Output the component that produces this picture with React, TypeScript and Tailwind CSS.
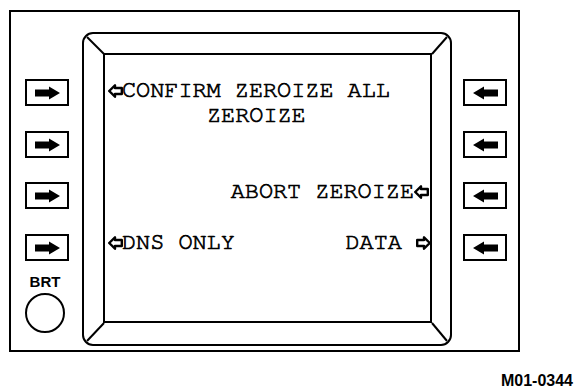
import React from "react";

const mono = {
  fontFamily: "'Nimbus Mono PS', 'Nimbus Mono L', FreeMono, Courier, 'Courier New', 'Liberation Mono', monospace",
};
const sans = { fontFamily: "'Liberation Sans', Arial, sans-serif" };

function HollowArrow({ dir }: { dir: "left" | "right" }) {
  return (
    <span className="inline-block w-[14px] align-[-1px]">
      <svg width="15" height="14" viewBox="0 0 15 14" className={dir === "right" ? "-scale-x-100" : ""}>
        <path
          d="M1.2 7 L7 1.3 L7 4 L13.8 4 L13.8 10 L7 10 L7 12.7 Z"
          fill="none"
          stroke="black"
          strokeWidth="2.4"
          strokeLinejoin="round"
        />
      </svg>
    </span>
  );
}

function KeyButton({ dir }: { dir: "left" | "right" }) {
  return (
    <div className="w-[44px] h-[27px] border-2 border-black flex items-center justify-center">
      <svg width="27" height="14" viewBox="0 0 27 14" className={dir === "left" ? "-scale-x-100" : ""}>
        <path d="M1 3.6 L15 3.6 L15 0.5 L26 7 L15 13.5 L15 10.4 L1 10.4 Z" fill="black" />
      </svg>
    </div>
  );
}

export default function App() {
  return (
    <div className="w-[584px] h-[389px] bg-white pt-[10px] pl-[9px]">
      <div className="w-[511px] h-[342px] border-2 border-black flex">
        {/* Left key column */}
        <div className="w-[71px] flex flex-col pl-[14px] pt-[67px]">
          <KeyButton dir="right" />
          <div className="h-[25px]" />
          <KeyButton dir="right" />
          <div className="h-[24px]" />
          <KeyButton dir="right" />
          <div className="h-[25px]" />
          <KeyButton dir="right" />
          <div
            className="mt-[13px] w-[40px] text-center text-[15px] font-bold leading-none"
            style={sans}
          >
            BRT
          </div>
          <div className="mt-[4px] w-[40px] h-[40px] rounded-full border-2 border-black" />
        </div>

        {/* Bezel */}
        <div className="relative mt-[20px] w-[370px] h-[314px] border-2 border-black rounded-[11px] pt-[19px] pl-[19px]">
          <svg className="absolute -left-[2px] -top-[2px]" width="370" height="314" viewBox="0 0 370 314">
            <line x1="5" y1="5" x2="22" y2="22" stroke="black" strokeWidth="2" />
            <line x1="365" y1="5" x2="350" y2="22" stroke="black" strokeWidth="2" />
            <line x1="5" y1="309" x2="22" y2="291" stroke="black" strokeWidth="2" />
            <line x1="365" y1="309" x2="350" y2="291" stroke="black" strokeWidth="2" />
          </svg>
          <div
            className="relative w-[329px] h-[270px] border-2 border-black bg-white pt-[23px] pl-[3px] pr-0 text-[23.5px] text-black leading-[25.3px] [-webkit-text-stroke:0.7px_black]"
            style={mono}
          >
            <div className="whitespace-pre">
              <HollowArrow dir="left" />CONFIRM ZEROIZE ALL
            </div>
            <div className="whitespace-pre pl-[99px]">ZEROIZE</div>
            <div className="h-[25.3px]" />
            <div className="h-[25.3px]" />
            <div className="whitespace-pre text-right pr-[2px]">
              ABORT ZEROIZE<HollowArrow dir="left" />
            </div>
            <div className="h-[25.3px]" />
            <div className="flex justify-between whitespace-pre">
              <span>
                <HollowArrow dir="left" />DNS ONLY
              </span>
              <span>
                DATA <HollowArrow dir="right" />
              </span>
            </div>
          </div>
        </div>

        {/* Right key column */}
        <div className="flex flex-col pl-[11px] pt-[67px]">
          <KeyButton dir="left" />
          <div className="h-[25px]" />
          <KeyButton dir="left" />
          <div className="h-[24px]" />
          <KeyButton dir="left" />
          <div className="h-[25px]" />
          <KeyButton dir="left" />
        </div>
      </div>
      <div className="w-[564px] mt-[21px] text-right text-[16px] font-bold leading-none"
        style={{ fontFamily: "'Liberation Sans Narrow', 'Liberation Sans', Arial, sans-serif" }}
      >
        M01-0344
      </div>
    </div>
  );
}
